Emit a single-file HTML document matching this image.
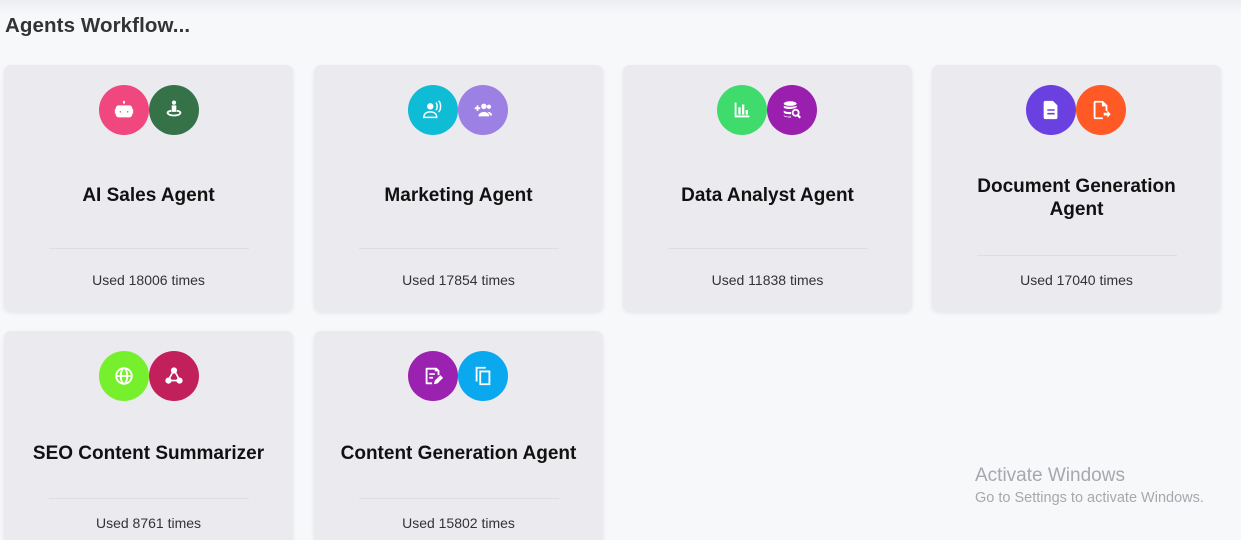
<!DOCTYPE html><html><head><style>
html,body{overflow:hidden}
body{margin:0;width:1241px;height:540px;background:#f7f8fa;font-family:"Liberation Sans",sans-serif;position:relative}
.top{position:absolute;left:0;top:0;width:1241px;height:14px;background:linear-gradient(#eceef1,#f7f8fa)}
h1{position:absolute;left:5px;top:14px;margin:0;font-size:20.5px;font-weight:bold;color:#333;letter-spacing:0.1px}
.card{position:absolute;width:289px;background:#ebeaef;border-radius:7px;box-shadow:0 2px 5px rgba(0,0,0,.08)}
.c{position:absolute;width:50px;height:50px;border-radius:50%;display:flex;align-items:center;justify-content:center}
.c svg{width:22px;height:22px;fill:#fff}
.t{position:absolute;left:0;width:289px;text-align:center;font-size:19px;font-weight:bold;color:#111;line-height:23px}
.d{position:absolute;left:45px;width:200px;height:1px;background:#dedde3}
.u{position:absolute;left:0;width:289px;text-align:center;font-size:14px;color:#333}
.aw{position:absolute;left:975px;top:465px;color:#a6a8ad;font-size:19px}
.aw2{position:absolute;left:975px;top:490px;color:#a6a8ad;font-size:14.5px}
</style></head><body>
<div class="top"></div>
<h1>Agents Workflow...</h1>

<div class="card" style="left:4px;top:65px;height:246px">
<div class="c" style="left:95px;top:20px;background:#f0477f"><svg viewBox="0 0 24 24"><path d="M11 2h2v3h-2zM6 7h12a3 3 0 0 1 3 3v1h1v5h-1v1a3 3 0 0 1-3 3H6a3 3 0 0 1-3-3v-1H2v-5h1v-1a3 3 0 0 1 3-3zm2 6l-1 1 1 1 1-1zm8 0l-1 1 1 1 1-1z"/></svg></div>
<div class="c" style="left:145px;top:20px;background:#367248"><svg viewBox="0 0 24 24"><circle cx="12" cy="4" r="2.3"/><path d="M9.5 7h5v7h-5zM4 15c0-2 3-3 5-3v2c-2 0-3 .6-3 1.2S8 17 12 17s6-.8 6-1.8-1-1.2-3-1.2v-2c2 0 5 1 5 3 0 2.5-4 4-8 4s-8-1.5-8-4z"/></svg></div>
<div class="t" style="top:119px">AI Sales Agent</div>
<div class="d" style="top:183px"></div>
<div class="u" style="top:207px">Used 18006 times</div></div>

<div class="card" style="left:314px;top:65px;height:246px">
<div class="c" style="left:94px;top:20px;background:#0fbcd6"><svg viewBox="0 0 24 24"><circle cx="9" cy="8" r="3.5"/><path d="M2 20c0-4 3-6 7-6s7 2 7 6zM15 4c2 1 2 7 0 8M18 2c3 2 3 10 0 12" stroke="#fff" stroke-width="1.6" fill="none"/></svg></div>
<div class="c" style="left:144px;top:20px;background:#9d80e4"><svg viewBox="0 0 24 24"><path d="M3 10h6M6 7v6" stroke="#fff" stroke-width="2"/><circle cx="13" cy="8" r="3"/><circle cx="18.5" cy="8.5" r="2.3"/><path d="M7 19c0-3 3-5 6-5s6 2 6 5zM17 14c3 0 5 1.5 5 4h-2"/></svg></div>
<div class="t" style="top:119px">Marketing Agent</div>
<div class="d" style="top:183px"></div>
<div class="u" style="top:207px">Used 17854 times</div></div>

<div class="card" style="left:623px;top:65px;height:246px">
<div class="c" style="left:94px;top:20px;background:#3fdb6d"><svg viewBox="0 0 24 24"><path d="M4 4h2v14h14v2H4zM8 9h2.5v8H8zm4-3h2.5v11H12zm4 6h2.5v5H16z"/></svg></div>
<div class="c" style="left:144px;top:20px;background:#9a1fae"><svg viewBox="0 0 24 24"><ellipse cx="10" cy="5" rx="7" ry="2.5"/><path d="M3 7c0 2 14 2 14 0v2c-5 3-14 2-14 0zM3 12c0 2 6 2.5 8 2v2.5c-3 .5-8-.3-8-2zM3 17c0 2 5 2.5 8 2v1c-3 .5-8-.3-8-2z"/><circle cx="16" cy="15" r="3.3" stroke="#fff" stroke-width="2" fill="none"/><path d="M18 17.5l3 3" stroke="#fff" stroke-width="2.3"/></svg></div>
<div class="t" style="top:119px">Data Analyst Agent</div>
<div class="d" style="top:183px"></div>
<div class="u" style="top:207px">Used 11838 times</div></div>

<div class="card" style="left:932px;top:65px;height:246px">
<div class="c" style="left:94px;top:20px;background:#6a40e0"><svg viewBox="0 0 24 24"><path d="M6 2h8l5 5v13a2 2 0 0 1-2 2H6a2 2 0 0 1-2-2V4a2 2 0 0 1 2-2z"/><path d="M8 12h8M8 16h8" stroke="#6a40e0" stroke-width="1.7"/></svg></div>
<div class="c" style="left:144px;top:20px;background:#ff5a25"><svg viewBox="0 0 24 24"><path d="M6 2h8l5 5v6h-2V8h-4V4H6v16h8v2H6a2 2 0 0 1-2-2V4a2 2 0 0 1 2-2zM15 15h4v-2.5l3.5 4-3.5 4V18h-4z"/></svg></div>
<div class="t" style="top:110px">Document Generation<br>Agent</div>
<div class="d" style="top:190px"></div>
<div class="u" style="top:207px">Used 17040 times</div></div>

<div class="card" style="left:4px;top:331px;height:230px">
<div class="c" style="left:95px;top:20px;background:#76f02c"><svg viewBox="0 0 24 24"><circle cx="12" cy="12" r="8.5" stroke="#fff" stroke-width="2" fill="none"/><ellipse cx="12" cy="12" rx="3.5" ry="8.5" stroke="#fff" stroke-width="2" fill="none"/><path d="M3.5 12h17" stroke="#fff" stroke-width="2"/></svg></div>
<div class="c" style="left:145px;top:20px;background:#c2205a"><svg viewBox="0 0 24 24" fill="none" stroke="#fff" stroke-width="1.8"><circle cx="12" cy="6" r="2.5"/><circle cx="6" cy="17" r="2.5"/><circle cx="18" cy="17" r="2.5"/><path d="M10.5 8L7 14.5M13.5 8l3.5 6.5M8.5 17h7"/></svg></div>
<div class="t" style="top:111px">SEO Content Summarizer</div>
<div class="d" style="top:167px"></div>
<div class="u" style="top:184px">Used 8761 times</div></div>

<div class="card" style="left:314px;top:331px;height:230px">
<div class="c" style="left:94px;top:20px;background:#9b22b0"><svg viewBox="0 0 24 24"><path d="M5 3h11l3 3v5h-2V7h-3V5H6v14h5v2H5a1 1 0 0 1-1-1V4a1 1 0 0 1 1-1zM8 9h6v1.8H8zm0 4h4v1.8H8z"/><path d="M13 21l1-4 6-6 3 3-6 6z"/></svg></div>
<div class="c" style="left:144px;top:20px;background:#0aa8ef"><svg viewBox="0 0 24 24"><path d="M4 2h11v2H6v14H4z"/><path d="M8 6h12v16H8zm2 2v12h8V8z"/></svg></div>
<div class="t" style="top:111px">Content Generation Agent</div>
<div class="d" style="top:167px"></div>
<div class="u" style="top:184px">Used 15802 times</div></div>

<div class="aw">Activate Windows</div>
<div class="aw2">Go to Settings to activate Windows.</div>
</body></html>
